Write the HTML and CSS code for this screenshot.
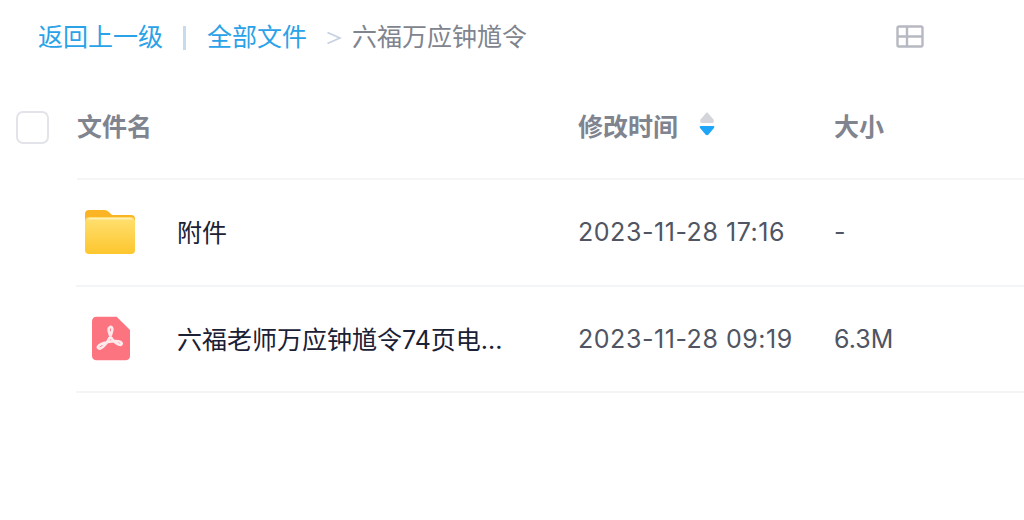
FILE: index.html
```html
<!DOCTYPE html>
<html lang="zh-CN">
<head>
<meta charset="utf-8">
<title>六福万应钟馗令</title>
<link rel="stylesheet" href="styles.css">
</head>
<body>
<div class="page">
  <div class="crumbs">
    <a class="link">返回上一级</a>
    <span class="bar"></span>
    <a class="link">全部文件</a>
    <svg class="gt" width="16" height="14" viewBox="0 0 16 14"><path d="M1.5 1.5 14 7 1.5 12.500" fill="none" stroke="#c5d1e0" stroke-width="1.800"/></svg>
    <span class="current">六福万应钟馗令</span>
    <svg class="grid-ic" width="28" height="23" viewBox="0 0 28 23"><path d="M3 1.500h22a1.500 1.500 0 0 1 1.500 1.500v17a1.500 1.500 0 0 1-1.500 1.500H3A1.500 1.500 0 0 1 1.500 20V3A1.500 1.500 0 0 1 3 1.500zM1.500 11.500h25M11 1.500v20" fill="none" stroke="#b6b9c1" stroke-width="2.400"/></svg>
  </div>
  <div class="table">
    <div class="head">
      <span class="check"></span>
      <div class="cols">
        <span class="col-name">文件名</span>
        <span class="col-date">修改时间<svg class="sort" width="16" height="26" viewBox="0 0 16 26"><path d="M8 1 14.500 8.500q1 3.500-1.500 3.500H3Q.5 12 1.500 8.500z" fill="#d3d5db"/><path d="M1.500 15H14.500Q16 15 15 17L9.500 23.500Q8 25 6.500 23.500L1 17Q0 15 1.500 15z" fill="#1ea5f7"/></svg></span>
        <span class="col-size">大小</span>
      </div>
    </div>
    <div class="row">
      <div class="col-name file">
        <svg class="icon" width="52" height="46" viewBox="0 0 52 46">
          <defs>
            <linearGradient id="folderFill" x1="0" y1="0" x2="0" y2="1">
              <stop offset="0" stop-color="#ffe071"/>
              <stop offset="1" stop-color="#fdc62e"/>
            </linearGradient>
          </defs>
          <path d="M1 5q0-4 4-4h15q3 0 5 2l3 3h19q4 0 4 4v10H1z" fill="#fbb524"/>
          <path d="M1 13q0-5 5-5h40q5 0 5 5v28q0 4-4 4H5q-4 0-4-4z" fill="url(#folderFill)"/>
          <path d="M3 10.500q1-1.500 3-1.500h40q2 0 3 1.500z" fill="#ffeeb5"/>
        </svg>
        <span class="fname">附件</span>
      </div>
      <span class="col-date cell date">2023-11-28 17:16</span>
      <span class="col-size cell">-</span>
    </div>
    <div class="row">
      <div class="col-name file">
        <svg class="icon pdf" width="38" height="45" viewBox="0 0 40 46">
          <path d="M5 0H26L40 14V41q0 5-5 5H5q-5 0-5-5V5q0-5 5-5z" fill="#fb7480"/>
          <path d="M18.500 11.500c1.800-1.500 3.500 0 2.800 3-.8 3.500-4 11-7.500 15-3 3.500-6 5-7.300 3.500-1.200-1.500 1.500-3.800 6-5.300 5-1.700 11-2.300 15-1.800 3 .4 4.500 1.800 3.600 3-1 1.300-3.800.4-6.300-1.500-3.600-2.700-6-7.500-7-11.500-.6-2.400-.5-3.700.7-4.400z" fill="none" stroke="#ffe9ea" stroke-width="2.800"/>
        </svg>
        <span class="fname">六福老师万应钟馗令74页电...</span>
      </div>
      <span class="col-date cell date">2023-11-28 09:19</span>
      <span class="col-size cell">6.3M</span>
    </div>
  </div>
</div>
</body>
</html>
```

FILE: styles.css
```css
* { box-sizing: border-box; }
html, body { margin: 0; padding: 0; height: 100%; background: #fff; overflow: hidden; }
body { font-family: Inter, "Noto Sans CJK SC", sans-serif; font-size: 25px; }
.page { width: 1024px; height: 520px; }
.crumbs { display: flex; align-items: center; height: 74px; padding-left: 38px; }
.link { color: #2aa2e8; line-height: 30px; }
.bar { width: 3px; height: 24px; margin: 2px 21px 0 20px; background: #c8dbee; }
.gt { margin: 2px 10px 0 19px; }
.current { color: #7f848f; line-height: 30px; }
.grid-ic { margin-left: 369px; margin-top: -2px; }
.table { display: flex; flex-direction: column; }
.head { display: flex; align-items: center; height: 106px; padding-left: 16px; }
.check { width: 33px; height: 33px; flex: none; margin-right: 28px; border: 2px solid #e2e4e9; border-radius: 7px; background: #fff; }
.cols { flex: 1; display: flex; align-items: center; height: 100%; border-bottom: 2px solid #f4f5f6; color: #7f848f; font-weight: 700; }
.col-name { width: 501px; flex: none; }
.col-date { width: 256px; flex: none; display: flex; align-items: center; }
.col-size { flex: 1; }
.sort { margin-left: 21px; margin-top: -2px; }
.cols > span { margin-top: -2px; }
.row { display: flex; align-items: center; height: 106.5px; margin-left: 76px; border-bottom: 2px solid #f4f5f6; }
.row .col-name { width: 502px; }
.file { display: flex; align-items: center; }
.icon { margin-left: 8px; margin-right: 41px; flex: none; }
.icon.pdf { margin-left: 16px; margin-right: 47px; }
.fname { color: #1b2135; line-height: 30px; margin-top: 2px; }
.cell { color: #4f5562; }
.date { letter-spacing: .55px; }
```
